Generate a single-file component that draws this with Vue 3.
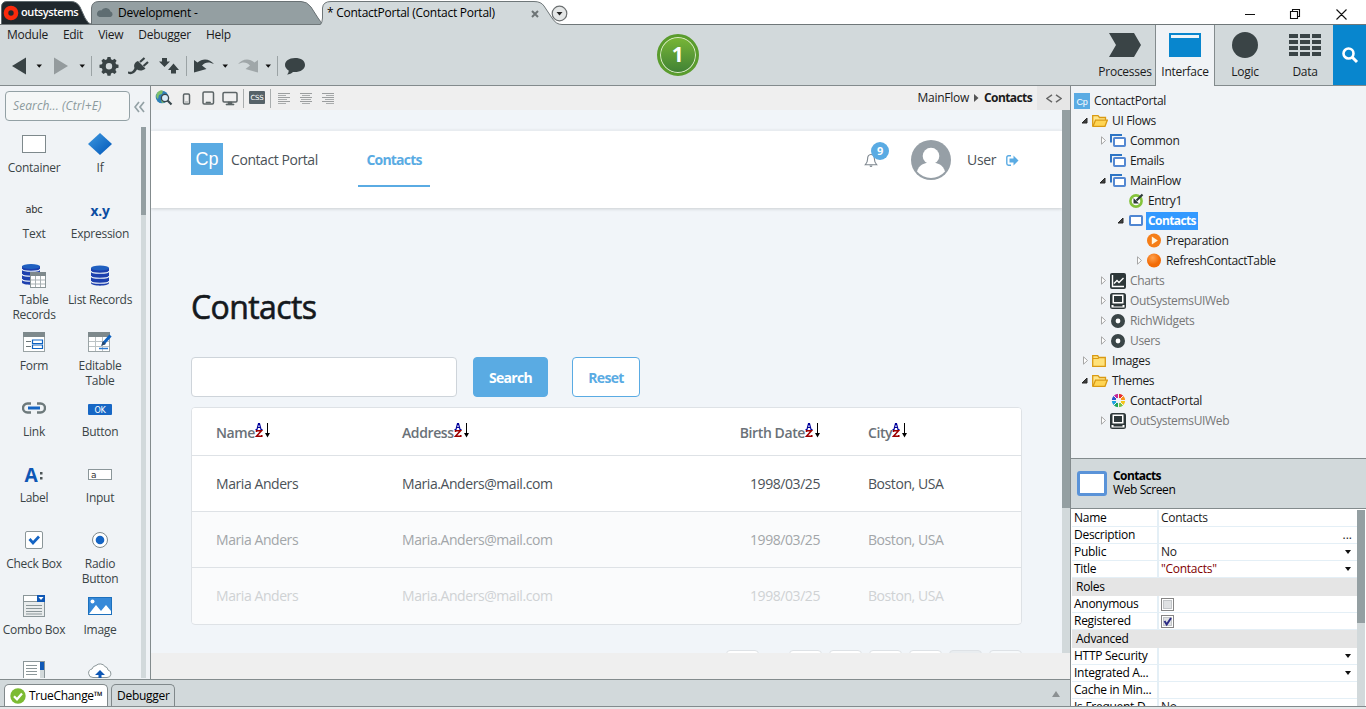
<template>
   <div class="studio">
      <header class="title-bar">
         <svg class="tab-shapes" width="1366" height="25" viewBox="0 0 1366 25">
            <path class="tab-dark" d="M1.5 24.500V7Q1.500 1.500 7 1.500H71Q77 1.500 80 7L85 18Q88 24 92 24.500Z" />
            <path class="tab-grey" d="M91.500 24.500V8Q92 1.500 99 1.500H301Q307 1.500 311 7L318 18Q321 22 322.500 24.500Z" />
            <path class="tab-open" d="M320 25Q322.500 24 322.500 19V8Q323 1.500 331 1.500H534Q541 1.500 544 6L552 18Q556 24 562 25Z" />
            <path class="tab-edge" d="M0 24.500H320Q322.500 23 322.500 18V8Q323 1.500 331 1.500H534Q541 1.500 544 6L552 18Q556 24.500 562 24.500H1366" />
            <circle cx="11" cy="13" r="5" fill="none" stroke="#fb2a0c" stroke-width="4.600" />
            <path d="M99.500 17H110.500A2.800 2.800 0 0 0 110.500 11.600 5 5 0 0 0 101.300 10.500 3.300 3.300 0 0 0 99.500 17Z" fill="#5f6d72" />
         </svg>
         <div class="brand">outsystems</div>
         <div class="tab-name tab-dev">Development -</div>
         <div class="tab-name tab-module">* ContactPortal (Contact Portal)</div>
         <svg class="tab-close" width="8" height="8" viewBox="0 0 8 8"><path d="M1 1l6 6M7 1L1 7" stroke="#6d7476" stroke-width="2" /></svg>
         <svg class="tab-menu" width="17" height="17" viewBox="0 0 17 17">
            <circle cx="8.500" cy="8.500" r="7.300" fill="#e4e6e6" stroke="#6b6f70" stroke-width="1.200" />
            <path d="M5.500 7h6l-3 3.500z" fill="#222" />
         </svg>
         <svg class="window-buttons" width="106" height="14" viewBox="0 0 106 14">
            <path d="M0 7.500H10M45.500 4.500h7v7h-7zM47.500 4.500v-2h7v7h-2M91.500 2.500l10 10M101.500 2.500l-10 10" fill="none" stroke="#111" stroke-width="1.100" />
         </svg>
      </header>

      <div class="ribbon">
         <div class="ribbon-main">
            <nav class="menu">
               <span v-for="m in menus" :key="m">{{ m }}</span>
            </nav>
            <div class="tools">
               <svg width="310" height="24" viewBox="0 0 310 24">
                  <g fill="#394345">
                     <path d="M12 12L26 3.500v17z" />
                     <path d="M54 3.500v17L68 12z" fill="#949b9d" />
                     <path d="M107.500 3h3l.5 2.300 1.600.7 2-1.300 2 2-1.200 2 .7 1.600 2.400.5v3l-2.400.5-.7 1.600 1.200 2-2 2-2-1.200-1.600.7-.5 2.400h-3l-.5-2.400-1.600-.7-2 1.200-2-2 1.200-2-.7-1.600-2.400-.5v-3l2.400-.5.7-1.600-1.200-2 2-2 2 1.300 1.600-.7zM109 9a3.200 3.200 0 1 0 0 6.400A3.200 3.200 0 0 0 109 9z" fill-rule="evenodd" />
                     <path d="M138 7l7.500 7.500c-3 2.500-6 2.500-8.500 1-2.500 4.500-6 5.500-9 4v-2c3 1 5 0 6.500-3.500-1-3 0-5.500 3.500-7z" />
                     <path d="M140 8l4.500-4M143.500 12l4.500-4" stroke="#394345" stroke-width="2.200" />
                     <path d="M162 4h5v3.500h3L164.500 13 159 7.500h3zM176 19.500h-5V16h-3l5.500-6.500L179 16h-3z" />
                     <path d="M194 6l3.500 2.500C203 3.500 210 5 214 10c-5-2.500-9-2-12 1.500l4.500 3.500-12.500 3.500z" />
                     <path d="M258 6l-3.500 2.500C249 3.500 242 5 238 10c5-2.500 9-2 12 1.500L245.500 15l12.500 3.500z" fill="#a0a7a9" />
                     <path d="M295 4c-6 0-10 3-10 7 0 2.300 1.500 4.200 3.700 5.500 0 2-.7 3-1.700 4 2.700-.2 4.500-1 6-2.500 7 .5 12-2.500 12-7s-4-7-10-7z" />
                  </g>
                  <path d="M36.500 10.500h5.500l-2.750 3.200zM79.500 10.500h5.500l-2.750 3.200zM222.500 10.500h5.500l-2.750 3.200zM265.500 10.500h5.500l-2.750 3.200z" fill="#111" />
                  <path d="M91.500 2v20M186.500 2v20M277.500 2v20" stroke="#9ba3a5" />
               </svg>
            </div>
            <div class="publish">1</div>
         </div>
         <div class="layers">
            <div class="layer layer-processes">
               <svg width="32" height="26" viewBox="0 0 32 26"><path d="M0 1h25l7 12-7 12H0l7-12z" fill="#3a4446" /></svg>
               <span>Processes</span>
            </div>
            <div class="layer layer-active">
               <svg width="32" height="26" viewBox="0 0 32 26"><path d="M0 1h32v24H0z" fill="#0886ce" /><path d="M2 3h28v3H2z" fill="#eef5fa" /></svg>
               <span>Interface</span>
            </div>
            <div class="layer">
               <svg width="32" height="26" viewBox="0 0 32 26"><circle cx="16" cy="13" r="13" fill="#3a4446" /></svg>
               <span>Logic</span>
            </div>
            <div class="layer layer-data">
               <svg width="32" height="26" viewBox="0 0 32 26">
                  <path d="M0 4h9M11 4h10M23 4h9M0 10h9M11 10h10M23 10h9M0 16h9M11 16h10M23 16h9M0 22h9M11 22h10M23 22h9" stroke="#3a4446" stroke-width="4" />
               </svg>
               <span>Data</span>
            </div>
            <div class="find">
               <svg width="18" height="18" viewBox="0 0 18 18"><circle cx="7.500" cy="7.500" r="5" fill="none" stroke="#fff" stroke-width="2.600" /><path d="M11 11l5 5" stroke="#fff" stroke-width="3" /></svg>
            </div>
         </div>
      </div>

      <div class="workspace">
         <div class="left-and-center">
            <div class="work-row">
               <aside class="palette">
                  <div class="palette-search">
                     <div class="search-box">Search... (Ctrl+E)</div>
                     <svg width="11" height="12" viewBox="0 0 11 12"><path d="M5 1L1 6l4 5M10 1L6 6l4 5" fill="none" stroke="#93a1a5" stroke-width="1.700" /></svg>
                  </div>
                  <div class="palette-body">
                     <div class="widgets">
                        <div v-for="(w, i) in widgets" :key="i" class="widget">
                           <svg width="24" height="24" viewBox="0 0 24 24" v-html="w.icon"></svg>
                           <span v-if="w.name">{{ w.name }}</span>
                        </div>
                     </div>
                     <div class="palette-scroll"><div></div></div>
                  </div>
               </aside>

               <main class="editor">
                  <div class="editor-bar">
                     <svg class="editor-tools" width="190" height="23" viewBox="0 0 190 23">
                        <circle cx="11" cy="11" r="6.300" fill="#2e7fb6" />
                        <path d="M6 7q3-4 6-2l-1 3-3 1-1 4q-3-2-1-6zM10 14l3-1 1 3-3 1z" fill="#7fc06a" />
                        <circle cx="14" cy="12" r="3.600" fill="#d9ecf7" stroke="#39474c" stroke-width="1.300" />
                        <path d="M16.500 14.500l4 4" stroke="#39474c" stroke-width="2.200" />
                        <g fill="none" stroke="#5c6466" stroke-width="1.500">
                           <rect x="32.500" y="8" width="6" height="10" rx="1.200" />
                           <rect x="52" y="6" width="10.500" height="12" rx="1.200" />
                           <rect x="72" y="6.500" width="14" height="9.500" rx="1.200" />
                        </g>
                        <path d="M34 16h3M55 16h4.500v1H55zM77 16h4v2h2v1h-8v-1h2z" fill="#5c6466" stroke="#5c6466" stroke-width=".6" />
                        <path d="M92.500 3v19M119.500 3v19" stroke="#a9adae" />
                        <rect x="98" y="5" width="16" height="13" rx="1" fill="#566268" />
                        <text x="106" y="13.700" class="css-mark">CSS</text>
                        <path d="M127 7.500h12M127 11.500h12M127 15.500h12M149 7.500h12M149 11.500h12M149 15.500h12M171 7.500h12M171 11.500h12M171 15.500h12" stroke="#9b9e9f" />
                        <path d="M127 9.500h8M127 13.500h9M127 17.500h8M151 9.500h8M150 13.500h10M151 17.500h8M175 9.500h8M174 13.500h9M175 17.500h8" stroke="#a9acad" />
                     </svg>
                     <div class="crumbs">
                        <span>MainFlow</span>
                        <svg width="5" height="8" viewBox="0 0 5 8"><path d="M0 0l4.500 4L0 8z" fill="#555" /></svg>
                        <b>Contacts</b>
                     </div>
                     <div class="source-toggle">
                        <svg width="16" height="9" viewBox="0 0 16 9"><path d="M6 .8L.8 4.500 6 8.200M10 .8l5.200 3.700L10 8.200" fill="none" stroke="#666" stroke-width="1.500" /></svg>
                     </div>
                  </div>
                  <div class="canvas">
                     <div class="page">
                        <div class="page-top">
                           <div class="app-logo">Cp</div>
                           <div class="app-name">Contact Portal</div>
                           <div class="app-link">Contacts</div>
                           <div class="bell">
                              <svg width="14" height="15" viewBox="0 0 14 15"><path d="M7 1.500C4.500 1.500 3.600 3.500 3.600 6c0 3-1 4.500-2.400 5.800h11.600C11.400 10.500 10.400 9 10.400 6c0-2.500-.9-4.500-3.400-4.500z" fill="none" stroke="#7d868e" stroke-width="1.100" /><path d="M5.500 12.500h3q-.2 1.500-1.500 1.500t-1.500-1.500z" fill="#7d868e" /></svg>
                              <span class="badge">9</span>
                           </div>
                           <svg class="avatar" width="42" height="42" viewBox="0 0 42 42">
                              <circle cx="21" cy="21" r="20" fill="#969fa6" />
                              <circle cx="21" cy="17" r="8.300" fill="#fff" />
                              <path d="M7 32.500C9 26 14 23.500 21 23.500s12 2.500 14 9A18.500 18.500 0 0 1 7 32.500z" fill="#fff" />
                           </svg>
                           <div class="user-name">User</div>
                           <svg class="logout" width="13" height="11" viewBox="0 0 13 11"><path d="M5 .8H2.500Q.8.800.8 2.500v6q0 1.700 1.700 1.700H5" fill="none" stroke="#5aabe3" stroke-width="1.400" /><path d="M3.500 3.500h4V.5l5 5-5 5v-3h-4z" fill="#5aabe3" /></svg>
                        </div>
                        <div class="page-content">
                           <h1>Contacts</h1>
                           <div class="filter">
                              <div class="filter-input"></div>
                              <div class="btn btn-primary">Search</div>
                              <div class="btn btn-reset">Reset</div>
                           </div>
                           <div class="records">
                              <div class="record record-head">
                                 <div v-for="c in columns" :key="c" class="cell">
                                    {{ c }}<svg width="15" height="16" viewBox="0 0 15 16">
                                       <path d="M.5 7.500h1.500l1.500-6h1l1.500 6h1.500M2.500 5.500h3" fill="none" stroke="#00009c" stroke-width="1.200" />
                                       <path d="M1.500 10V8.800h5L1.500 14.300h5.300V13" fill="none" stroke="#9c0000" stroke-width="1.500" />
                                       <path d="M12.500 1v12" stroke="#000" /><path d="M10 11h5l-2.500 4.500z" fill="#000" />
                                    </svg>
                                 </div>
                              </div>
                              <div v-for="n in 3" :key="n" class="record" :class="'record-' + n">
                                 <div class="cell">Maria Anders</div>
                                 <div class="cell">Maria.Anders@mail.com</div>
                                 <div class="cell">1998/03/25</div>
                                 <div class="cell">Boston, USA</div>
                              </div>
                           </div>
                           <div class="pager"><i v-for="n in 7" :key="n"></i></div>
                        </div>
                     </div>
                     <div class="canvas-scroll"><div></div></div>
                  </div>
               </main>
            </div>
            <footer class="status">
               <div class="status-tab status-on">
                  <svg width="16" height="16" viewBox="0 0 16 16"><circle cx="8" cy="8" r="7.700" fill="#7cbb32" /><path d="M4 8.200l3 3 5-5.700" fill="none" stroke="#fff" stroke-width="2.300" /></svg>
                  <span>TrueChange™</span>
               </div>
               <div class="status-tab">Debugger</div>
               <svg class="status-up" width="8" height="6" viewBox="0 0 8 6"><path d="M0 6l4-6 4 6z" fill="#8b9092" /></svg>
            </footer>
         </div>

         <aside class="explorer">
            <div class="tree">
               <div v-for="(n, i) in tree" :key="i" class="node" :style="{ paddingLeft: indent(n.level) }" :class="{ dim: n.dim, selected: n.selected }">
                  <span v-if="n.level" class="arrow">
                     <svg v-if="n.open" width="7" height="7" viewBox="0 0 7 7"><path d="M6 1v5H1z" fill="#404040" stroke="#262626" /></svg>
                     <svg v-else-if="n.open === false" class="shut" width="6" height="9" viewBox="0 0 6 9"><path d="M.5.800l4 3.700-4 3.700z" fill="#fff" stroke="#a6a6a6" /></svg>
                  </span>
                  <svg class="node-icon" width="16" height="16" viewBox="0 0 16 16" v-html="icons[n.icon]"></svg>
                  <span class="node-name">{{ n.name }}</span>
               </div>
            </div>
            <div class="selection">
               <div class="screen-icon"></div>
               <div class="selection-text"><b>Contacts</b><span>Web Screen</span></div>
            </div>
            <div class="props">
               <div class="props-list">
                  <template v-for="p in properties" :key="p.name">
                     <div v-if="p.group" class="prop-group">{{ p.name }}</div>
                     <div v-else class="prop">
                        <div class="prop-name">{{ p.name }}</div>
                        <div class="prop-value" :class="{ literal: p.literal }">
                           <svg v-if="p.check !== undefined" width="13" height="13" viewBox="0 0 13 13">
                              <rect x=".5" y=".5" width="12" height="12" fill="#fff" stroke="#858585" />
                              <rect x="2.500" y="2.500" width="8" height="8" fill="#dfe1e3" stroke="#c2c5c8" />
                              <path v-if="p.check" d="M3.500 6l2.200 3.500L10 3" fill="none" stroke="#2b2b85" stroke-width="2" />
                           </svg>
                           <span v-else>{{ p.value }}</span>
                           <svg v-if="p.drop" class="drop" width="6" height="4" viewBox="0 0 6 4"><path d="M0 0h6L3 4z" fill="#111" /></svg>
                           <span v-if="p.more" class="more">...</span>
                        </div>
                     </div>
                  </template>
               </div>
               <div class="props-scroll"><div></div></div>
            </div>
         </aside>
      </div>
      <div class="frame-bottom"></div>
   </div>
</template>

<script setup>
const menus = ["Module", "Edit", "View", "Debugger", "Help"];

const columns = ["Name", "Address", "Birth Date", "City"];

const cylinder =
   '<path d="M3 4v15c0 3.500 18 3.500 18 0V4z" fill="#1d3fae"/><ellipse cx="12" cy="4" rx="9" ry="2.500" fill="#1f5fc0"/><path d="M3 7c0 3 18 3 18 0M3 12c0 3 18 3 18 0M3 17c0 3 18 3 18 0" fill="none" stroke="#eef3f8" stroke-width="1.200"/>';

// Toolbox widgets, icons are 24x24
const widgets = [
   { name: "Container", icon: '<rect x=".5" y="3.500" width="23" height="17" fill="#fff" stroke="#7e898c"/>' },
   { name: "If", icon: '<defs><linearGradient id="dia" x1="0" y1="0" x2="1" y2="1"><stop stop-color="#3f9ae0"/><stop offset="1" stop-color="#0055b8"/></linearGradient></defs><path d="M12 1l12 11-12 11L0 12z" fill="url(#dia)"/>' },
   { name: "Text", icon: '<text x="12" y="15" text-anchor="middle" font-size="10" font-family="DejaVu Sans" fill="#333" textLength="17" lengthAdjust="spacingAndGlyphs">abc</text>' },
   { name: "Expression", icon: '<text x="12" y="18" text-anchor="middle" font-size="14.500" font-weight="700" font-family="Open Sans" fill="#0c4da2" textLength="19" lengthAdjust="spacingAndGlyphs">x.y</text>' },
   {
      name: "Table Records",
      icon: '<path d="M0 2v16.500c0 3 18 3 18 0V2z" fill="#1d3fae"/><ellipse cx="9" cy="2.500" rx="9" ry="2.500" fill="#1f5fc0"/><path d="M0 5c0 3 18 3 18 0M0 10c0 3 18 3 18 0M0 15c0 3 18 3 18 0" fill="none" stroke="#eef3f8" stroke-width="1.200"/><rect x="8.500" y="8.500" width="15" height="15" fill="#fff" stroke="#8b9699"/><path d="M8 8h16v4H8z" fill="#7e898c"/><path d="M9 16h14M9 20h14M13.500 12v11M18.500 12v11" stroke="#a8b0b3"/>',
   },
   { name: "List Records", icon: cylinder },
   { name: "Form", icon: '<rect x="1.500" y="2.500" width="21" height="19" fill="#fff" stroke="#9aa3a5"/><path d="M1 2h22v5H1z" fill="#7e898c"/><path d="M4 11.500h5M4 16.500h5" stroke="#6b7578"/><path d="M10.500 10h10v3.500h-10zM10.500 15h10v3.500h-10z" fill="#fff" stroke="#0f62c0" stroke-width="1.200"/>' },
   {
      name: "Editable Table",
      icon: '<rect x=".5" y="2.500" width="21" height="19" fill="#fff" stroke="#9aa3a5"/><path d="M0 2h22v5H0z" fill="#7e898c"/><path d="M1 11.500h20M1 16.500h20M7.500 7v14M14.500 7v14" stroke="#bcc3c5"/><path d="M22.500 5.500L15 14" stroke="#0f62c0" stroke-width="3"/><path d="M15 11l3 3-5 2z" fill="#27496e"/><path d="M11 18.500h9" stroke="#2a7ad2" stroke-width="1.500"/>',
   },
   { name: "Link", icon: '<path d="M9 7.500H5.500A4.200 4.200 0 0 0 5.500 16.500H9M15 7.500h3.500A4.200 4.200 0 0 1 18.500 16.500H15" fill="none" stroke="#6d797b" stroke-width="2.400"/><path d="M6 12h12" stroke="#1464c4" stroke-width="3"/>' },
   { name: "Button", icon: '<rect y="8" width="24" height="11" rx="1" fill="#1767c5"/><text x="12" y="16.500" text-anchor="middle" font-size="8" font-family="DejaVu Sans" fill="#fff" textLength="11">OK</text>' },
   { name: "Label", icon: '<text x="9" y="20" text-anchor="middle" font-size="20" font-weight="700" font-family="Open Sans" fill="#0f57b5" textLength="13" lengthAdjust="spacingAndGlyphs">A</text><path d="M18 10h2.500v2.500h-2.500zM18 15h2.500v2.500h-2.500z" fill="#4c5557"/>' },
   { name: "Input", icon: '<rect x=".5" y="7.500" width="23" height="10" fill="#fff" stroke="#8b9699"/><text x="3" y="15.500" font-size="9" font-family="DejaVu Sans" fill="#333">a</text>' },
   { name: "Check Box", icon: '<rect x="3.500" y="3.500" width="17" height="17" rx="1.500" fill="#fff" stroke="#8b9699"/><path d="M7.500 11l3.500 4 6-6.500" fill="none" stroke="#1464c4" stroke-width="2.700"/>' },
   { name: "Radio Button", icon: '<circle cx="12" cy="12" r="7.500" fill="#fff" stroke="#7e898c"/><circle cx="12" cy="12" r="4.300" fill="#1464c4"/>' },
   { name: "Combo Box", icon: '<rect x="1.500" y="1.500" width="21" height="21" fill="#fff" stroke="#8b9699"/><path d="M2 8h20v14H2z" fill="#e9eced"/><path d="M2 7.500h20M4 11.500h16M4 14.500h16M4 17.500h16M4 20h16" stroke="#8b9699"/><path d="M15 1h8v7h-8z" fill="#0f57b5"/><path d="M16.500 3h5L19 6z" fill="#fff"/>' },
   { name: "Image", icon: '<rect x=".5" y="3.500" width="23" height="17" fill="#3689d8" stroke="#1c70bd"/><circle cx="4.500" cy="7.500" r="2" fill="#fff"/><path d="M1 20l7-9 5 6 5-6 5 6v3z" fill="#fff"/>' },
   { icon: '<rect x="1.500" y="1.500" width="21" height="23" fill="#fff" stroke="#8b9699"/><path d="M4 5.500h11M4 8.500h11M4 11.500h11M4 14.500h11" stroke="#8b9699"/><path d="M18 2h4v8h-4z" fill="#0f57b5"/><path d="M18 10h4v14h-4z" fill="#d2d9db"/>' },
   { icon: '<path d="M5 17.500a4.300 4.300 0 0 1-1-8.500 5 5 0 0 1 4-3.500 6 6 0 0 1 9 1 4 4 0 0 1 3 3.500 3.800 3.800 0 0 1-1 7.500z" fill="#fff" stroke="#8b9699"/><path d="M12 10l5 5h-3.500v5h-3v-5H7z" fill="#0f57b5"/>' },
];

// Tree icons, 16x16
const icons = {
   app: '<rect width="16" height="16" fill="#5aabe3"/><text x="8" y="11.500" text-anchor="middle" font-size="9" font-family="Liberation Sans" fill="#fff">Cp</text>',
   folderOpen: '<path d="M.7 13V2.700h5.300l1.500 1.800h6V7" fill="#ffe68a" stroke="#d99a14" stroke-width="1.300"/><path d="M3.500 7.200h11.800L13 13.300H1z" fill="#ffd554" stroke="#d99a14" stroke-width="1.300"/>',
   folder: '<path d="M.7 13.300V2.700h5l1 1.800h6.600v8.800z" fill="#ffe27a" stroke="#d99a14" stroke-width="1.300"/><path d="M1 5.500h5.500l1-1" fill="none" stroke="#d99a14"/>',
   flow: '<path d="M1 9.500V2h11" fill="none" stroke="#2d74c4" stroke-width="2"/><rect x="4" y="5" width="11" height="8" rx=".7" fill="#fff" stroke="#5488d2" stroke-width="2"/>',
   entry: '<circle cx="8" cy="8" r="5.600" fill="#fff" stroke="#84c33a" stroke-width="2.600"/><path d="M14.500 1.500L8.500 7.500" stroke="#2e393b" stroke-width="2.200"/><path d="M5.500 5v5.500H11z" fill="#2e393b"/>',
   screen: '<rect x="2" y="3" width="12" height="9" rx=".8" fill="#fff" stroke="#4f86d2" stroke-width="2"/>',
   action: '<defs><radialGradient id="org" cx=".4" cy=".3"><stop stop-color="#ffa14d"/><stop offset="1" stop-color="#f26b06"/></radialGradient></defs><circle cx="8" cy="7.500" r="7" fill="url(#org)"/>',
   prepare: '<circle cx="8" cy="7.500" r="7" fill="#f57d17"/><path d="M5.800 3.500v8l6-4z" fill="#fff4dc"/>',
   chart: '<rect width="16" height="16" rx="2" fill="#2d3739"/><path d="M2.500 2v11.500H14M4 10.500l3-3 2 2L13.500 5" fill="none" stroke="#fff" stroke-width="1.400"/>',
   web: '<rect width="16" height="16" rx="2.500" fill="#2d3739"/><path d="M2.500 1.500h11v9h-11zM1.500 12h2v1.500h9V12h2v2.500h-13z" fill="#fff"/><rect x="4" y="3" width="8" height="6" fill="#2d3739"/>',
   ring: '<circle cx="8" cy="8" r="4.700" fill="#fff" stroke="#3a4547" stroke-width="4.600"/>',
   theme: '<g fill="none" stroke-width="4" transform="translate(8.500 7.500)"><path d="M0-4.700A4.700 4.700 0 0 1 3.300-3.300" stroke="#e8302a"/><path d="M3.300-3.300A4.700 4.700 0 0 1 4.700 0" stroke="#f7941d"/><path d="M4.700 0A4.700 4.700 0 0 1 3.300 3.300" stroke="#f5c518"/><path d="M3.300 3.300A4.700 4.700 0 0 1 0 4.700" stroke="#7dc242"/><path d="M0 4.700A4.700 4.700 0 0 1-3.300 3.300" stroke="#1ba35c"/><path d="M-3.300 3.300A4.700 4.700 0 0 1-4.700 0" stroke="#1da1e0"/><path d="M-4.700 0A4.700 4.700 0 0 1-3.300-3.300" stroke="#2b55c9"/><path d="M-3.300-3.300A4.700 4.700 0 0 1 0-4.700" stroke="#c2289a"/><path d="M0-8V8M-8 0H8M-5.600-5.600L5.600 5.600M5.600-5.600L-5.600 5.600" stroke="#f0f3f6" stroke-width="1"/></g>',
};

const tree = [
   { name: "ContactPortal", level: 0, icon: "app" },
   { name: "UI Flows", level: 1, icon: "folderOpen", open: true },
   { name: "Common", level: 2, icon: "flow", open: false },
   { name: "Emails", level: 2, icon: "flow" },
   { name: "MainFlow", level: 2, icon: "flow", open: true },
   { name: "Entry1", level: 3, icon: "entry" },
   { name: "Contacts", level: 3, icon: "screen", open: true, selected: true },
   { name: "Preparation", level: 4, icon: "prepare" },
   { name: "RefreshContactTable", level: 4, icon: "action", open: false },
   { name: "Charts", level: 2, icon: "chart", open: false, dim: true },
   { name: "OutSystemsUIWeb", level: 2, icon: "web", open: false, dim: true },
   { name: "RichWidgets", level: 2, icon: "ring", open: false, dim: true },
   { name: "Users", level: 2, icon: "ring", open: false, dim: true },
   { name: "Images", level: 1, icon: "folder", open: false },
   { name: "Themes", level: 1, icon: "folderOpen", open: true },
   { name: "ContactPortal", level: 2, icon: "theme" },
   { name: "OutSystemsUIWeb", level: 2, icon: "web", open: false, dim: true },
];

// The root has no arrow column, so it starts at the same edge as level 1
const indent = (level) => Math.max(level - 1, 0) * 18 + 3 + "px";

const properties = [
   { name: "Name", value: "Contacts" },
   { name: "Description", more: true },
   { name: "Public", value: "No", drop: true },
   { name: "Title", value: '"Contacts"', literal: true, drop: true },
   { name: "Roles", group: true },
   { name: "Anonymous", check: false },
   { name: "Registered", check: true },
   { name: "Advanced", group: true },
   { name: "HTTP Security", drop: true },
   { name: "Integrated A...", drop: true },
   { name: "Cache in Min..." },
   { name: "Is Frequent D...", value: "No" },
];
</script>

<style>
body {
   overflow: hidden;
}
</style>

<style scoped>
.studio {
   width: 1366px;
   height: 709px;
   display: flex;
   flex-direction: column;
   background: #fff;
   color: #1b1b1b;
   font-family: "Open Sans", "Noto Sans", sans-serif;
   font-size: 12px;
   line-height: 16px;
   letter-spacing: -0.27px;
   overflow: hidden;
   white-space: nowrap;
}

svg {
   display: block;
   flex: none;
}

/* Window title */
.title-bar {
   position: relative;
   height: 25px;
   display: flex;
   align-items: center;
   flex: none;
}

.tab-shapes {
   position: absolute;
   top: 0;
   left: 0;
}

.tab-dark {
   fill: #20282d;
   stroke: #5f6a6e;
}

.tab-grey {
   fill: #949fa2;
   stroke: #697174;
}

.tab-open {
   fill: #d2d9db;
}

.tab-edge {
   fill: none;
   stroke: #6f7779;
}

.brand,
.tab-name,
.tab-close,
.tab-menu,
.window-buttons {
   position: relative;
}

.brand {
   width: 97px;
   padding-left: 21px;
   color: #fff;
   font-size: 11px;
   font-weight: 600;
   letter-spacing: -0.4px;
   margin-top: -1px;
}

.tab-name {
   color: #000;
   padding-top: 1px;
}

.tab-dev {
   width: 209px;
   letter-spacing: -0.2px;
}

.tab-module {
   width: 204px;
   letter-spacing: -0.25px;
}

.tab-menu {
   margin-left: 12px;
   margin-top: 2px;
}

.tab-close {
   margin-top: 2px;
}

.window-buttons {
   margin-left: auto;
   margin-right: 15px;
   margin-top: 2px;
}

/* Menu and toolbar */
.ribbon {
   height: 61px;
   display: flex;
   flex: none;
   background: #d2d9db;
}

.ribbon-main {
   position: relative;
   flex: 1;
   border-bottom: 1px solid #838b8d;
}

.menu {
   display: flex;
   gap: 15px;
   padding: 2px 0 0 7px;
}

.tools {
   padding-top: 11px;
}

.publish {
   position: absolute;
   left: 657px;
   top: 9px;
   width: 42px;
   height: 42px;
   box-sizing: border-box;
   border-radius: 50%;
   border: 3px solid #5a9c2d;
   background: linear-gradient(#79b736, #3f8135);
   box-shadow: inset 0 0 0 1px #dcecc9;
   color: #fff;
   font-size: 21px;
   font-weight: 700;
   line-height: 35px;
   text-align: center;
   text-indent: -1px;
}

.layers {
   display: flex;
}

.layer {
   width: 60px;
   box-sizing: border-box;
   display: flex;
   flex-direction: column;
   align-items: center;
   padding-top: 7px;
   gap: 6px;
   border-bottom: 1px solid #838b8d;
}

.layer-processes {
   width: 61px;
   padding-left: 1px;
}

.layer-active {
   background: #f0f3f6;
   border-left: 1px solid #838b8d;
   border-right: 1px solid #838b8d;
   border-bottom: 0;
}

.layer-data {
   width: 58px;
   padding-left: 2px;
}

.find {
   width: 33px;
   display: flex;
   align-items: center;
   justify-content: center;
   background: #0886ce;
   border-bottom: 1px solid #838b8d;
   box-sizing: border-box;
}

.workspace {
   height: 620px;
   display: flex;
   flex: none;
}

.left-and-center {
   width: 1070px;
   display: flex;
   flex-direction: column;
}

.work-row {
   height: 593px;
   display: flex;
   border-bottom: 1px solid #838b8d;
}

/* Toolbox */
.palette {
   width: 150px;
   height: 593px;
   display: flex;
   flex-direction: column;
   background: #f0f3f6;
   border-right: 1px solid #838b8d;
}

.palette-search {
   height: 41px;
   display: flex;
   align-items: center;
   padding-left: 5px;
   gap: 4px;
   box-sizing: border-box;
   flex: none;
}

.search-box {
   width: 125px;
   height: 30px;
   box-sizing: border-box;
   padding: 6px 7px;
   border: 1px solid #93a1a5;
   border-radius: 4px;
   background: #f5f7f7;
   color: #8c9a9d;
   font-style: italic;
   letter-spacing: 0.1px;
   margin-top: -1px;
}

.palette-body {
   flex: 1;
   min-height: 0;
   display: flex;
   justify-content: space-between;
   padding-right: 4px;
}

.widgets {
   display: grid;
   grid-template-columns: 66px 66px;
   grid-auto-rows: 66px;
   height: 546px;
   padding: 5px 0 0 1px;
   overflow: hidden;
}

.widget {
   display: flex;
   flex-direction: column;
   align-items: center;
   gap: 4px;
   line-height: 15px;
   text-align: center;
   color: #3a4446;
}

.widget:nth-child(5) span,
.widget:nth-child(8) span,
.widget:nth-child(14) span {
   width: 50px;
   white-space: normal;
}

.palette-scroll {
   width: 5px;
   height: 551px;
   background: #d2d9db;
}

.palette-scroll div {
   height: 88px;
   background: #949fa2;
}

/* Screen editor */
.editor {
   flex: 1;
   display: flex;
   flex-direction: column;
   background: #efefef;
}

.editor-bar {
   height: 24px;
   display: flex;
   align-items: center;
}

.editor-tools {
   margin-bottom: 1px;
}

.css-mark {
   fill: #fff;
   font-family: "DejaVu Sans", sans-serif;
   font-size: 7px;
   text-anchor: middle;
   letter-spacing: -0.2px;
}

.crumbs {
   margin-left: auto;
   display: flex;
   align-items: center;
   gap: 5px;
   padding-right: 5px;
}

.source-toggle {
   width: 33px;
   height: 24px;
   display: flex;
   align-items: center;
   justify-content: center;
   background: #e6e6e6;
}

.canvas {
   height: 543px;
   display: flex;
}

.page {
   width: 911px;
   height: 543px;
   overflow: hidden;
   background: #f1f5f9;
   font-size: 14px;
   letter-spacing: -0.43px;
   color: #4b5258;
}

.page-top {
   position: relative;
   margin-top: 20px;
   height: 78px;
   box-sizing: border-box;
   border-top: 1px solid #e8ecf0;
   background: #fff;
   box-shadow: 0 1px 3px rgba(0, 0, 0, 0.16);
   display: flex;
   align-items: flex-start;
   padding: 12px 0 0 40px;
   line-height: 34px;
}

.app-logo {
   width: 32px;
   height: 32px;
   background: #5aabe3;
   color: #fff;
   font: 18px/32px "Liberation Sans", sans-serif;
   letter-spacing: 0;
   text-align: center;
}

.app-name {
   width: 127px;
   padding-left: 8px;
}

.app-link {
   width: 72px;
   height: 42px;
   border-bottom: 2px solid #5aabe3;
   text-align: center;
   color: #5aabe3;
   font-weight: 700;
   letter-spacing: -0.8px;
}

.bell {
   position: relative;
   margin: 10px 0 0 434px;
}

.badge {
   position: absolute;
   left: 7px;
   top: -11px;
   width: 18px;
   height: 18px;
   border-radius: 50%;
   background: #5aabe3;
   color: #fff;
   font-size: 11px;
   font-weight: 700;
   line-height: 18px;
   text-align: center;
}

.avatar {
   margin: -4px 0 0 32px;
}

.user-name {
   width: 39px;
   padding-left: 15px;
   letter-spacing: -0.3px;
}

.logout {
   margin-top: 12px;
}

.page-content {
   padding: 74px 40px 0;
}

h1 {
   margin: 0;
   height: 75px;
   color: #15191d;
   font-size: 32px;
   font-weight: 400;
   -webkit-text-stroke: 0.6px #15191d;
   line-height: 50px;
   letter-spacing: -0.6px;
}

.filter {
   display: flex;
   height: 40px;
   font-weight: 700;
   line-height: 40px;
   text-align: center;
   letter-spacing: -0.7px;
}

.filter-input {
   width: 266px;
   box-sizing: border-box;
   border: 1px solid #ced4da;
   border-radius: 4px;
   background: #fff;
   margin-right: 16px;
}

.btn {
   box-sizing: border-box;
   border: 1px solid #5aabe3;
   border-radius: 4px;
}

.btn-primary {
   width: 75px;
   background: #5aabe3;
   color: #fff;
   margin-right: 24px;
}

.btn-reset {
   width: 68px;
   background: #fff;
   color: #5aabe3;
}

.records {
   margin-top: 10px;
   height: 218px;
   box-sizing: border-box;
   border: 1px solid #dee2e6;
   border-radius: 4px;
   background: #fafbfc;
   overflow: hidden;
}

.record {
   height: 56px;
   box-sizing: border-box;
   display: grid;
   grid-template-columns: 186px 264px 154px 177px;
   padding-left: 24px;
   align-items: center;
   border-top: 1px solid #dee2e6;
   background: #fff;
}

.cell:nth-child(3) {
   text-align: right;
}

.cell:nth-child(4) {
   padding-left: 48px;
}

.record-head {
   height: 47px;
   border-top: 0;
   color: #6a7178;
   font-weight: 600;
   letter-spacing: -0.4px;
}

.record-head .cell svg {
   display: inline-block;
   vertical-align: 1px;
   margin-bottom: -1px;
}

.record-2 {
   background: #fafbfc;
   color: #a2a6a9;
}

.record-3 {
   background: #fafbfc;
   color: #cfd2d4;
}

.pager {
   display: flex;
   justify-content: flex-end;
   gap: 7px;
   margin-top: 25px;
}

.pager i {
   width: 33px;
   height: 32px;
   box-sizing: border-box;
   border: 1px solid #dee2e6;
   border-radius: 4px;
   background: #fff;
}

.pager i:first-child {
   margin-right: 23px;
}

.pager i:nth-child(6) {
   background: #e9edf0;
}

.pager i:last-child {
   background: #f6f9fb;
}

.canvas-scroll {
   width: 8px;
   background: #d2d9db;
}

.canvas-scroll div {
   height: 398px;
   background: #949fa2;
}

/* Bottom tabs */
.status {
   height: 26px;
   display: flex;
   align-items: flex-end;
   background: #d2d9db;
   padding-left: 4px;
   gap: 3px;
   color: #000;
}

.status-tab {
   width: 64px;
   height: 22px;
   box-sizing: border-box;
   display: flex;
   align-items: center;
   gap: 3px;
   padding: 0 5px;
   border: 1px solid #80888a;
   border-bottom: 0;
   border-radius: 5px 5px 0 0;
}

.status-on {
   width: 104px;
   background: #fff;
   letter-spacing: -0.3px;
}

.status-up {
   margin: 0 10px 9px auto;
}

/* Element tree */
.explorer {
   width: 295px;
   display: flex;
   flex-direction: column;
   border-left: 1px solid #838b8d;
   background: #f0f3f6;
   min-height: 0;
}

.tree {
   height: 367px;
   padding-top: 5px;
   flex: none;
   letter-spacing: -0.35px;
}

.node {
   height: 20px;
   display: flex;
   align-items: center;
}

.arrow {
   width: 18px;
   display: flex;
   padding: 0 0 1px 7px;
   box-sizing: border-box;
   flex: none;
}

.shut {
   margin-left: 2px;
}

.node-icon {
   margin-right: 2px;
}

.node-name {
   padding: 0 2px;
   line-height: 18px;
}

.dim .node-name {
   color: #777;
}

.selected .node-name {
   background: #3399ff;
   color: #fff;
   font-weight: 700;
   letter-spacing: -0.6px;
}

.selection {
   height: 49px;
   flex: none;
   display: flex;
   align-items: center;
   gap: 6px;
   padding-left: 6px;
   background: #d2d9db;
   border-top: 1px solid #838b8d;
   border-bottom: 1px solid #838b8d;
   color: #000;
}

.screen-icon {
   width: 30px;
   height: 25px;
   box-sizing: border-box;
   border: 3px solid #5a93d8;
   border-radius: 3px;
   background: #fff;
   margin-bottom: 1px;
}

.selection-text {
   display: flex;
   flex-direction: column;
   line-height: 14px;
   padding-bottom: 1px;
   letter-spacing: -0.4px;
}

b {
   letter-spacing: -0.6px;
}

.props {
   flex: 1;
   min-height: 0;
   display: flex;
   padding: 1px 1px 0;
   background: #fff;
   color: #000;
   overflow: hidden;
}

.props-list {
   width: 285px;
   overflow: hidden;
}

.prop {
   height: 17px;
   display: flex;
   line-height: 16px;
}

.prop-name,
.prop-value {
   box-sizing: border-box;
   border-bottom: 1px solid #e4eff6;
   padding-left: 2px;
}

.prop-name {
   width: 85px;
}

.prop-value {
   flex: 1;
   display: flex;
   align-items: center;
   border-left: 2px solid #e4eff6;
   padding-right: 6px;
   color: #1b1b1b;
}

.prop-value.literal {
   color: #800000;
}

.drop,
.more {
   margin-left: auto;
}

.more {
   margin-right: -1px;
   letter-spacing: 0;
}

.prop-group {
   height: 18px;
   line-height: 18px;
   padding-left: 4px;
   background: #e5e5e5;
}

.props-scroll {
   width: 8px;
   background: #d2d9db;
}

.props-scroll div {
   height: 113px;
   background: #949fa2;
}

.frame-bottom {
   height: 3px;
   box-sizing: border-box;
   border-top: 1px solid #838b8d;
   background: #e5e8e9;
}
</style>
